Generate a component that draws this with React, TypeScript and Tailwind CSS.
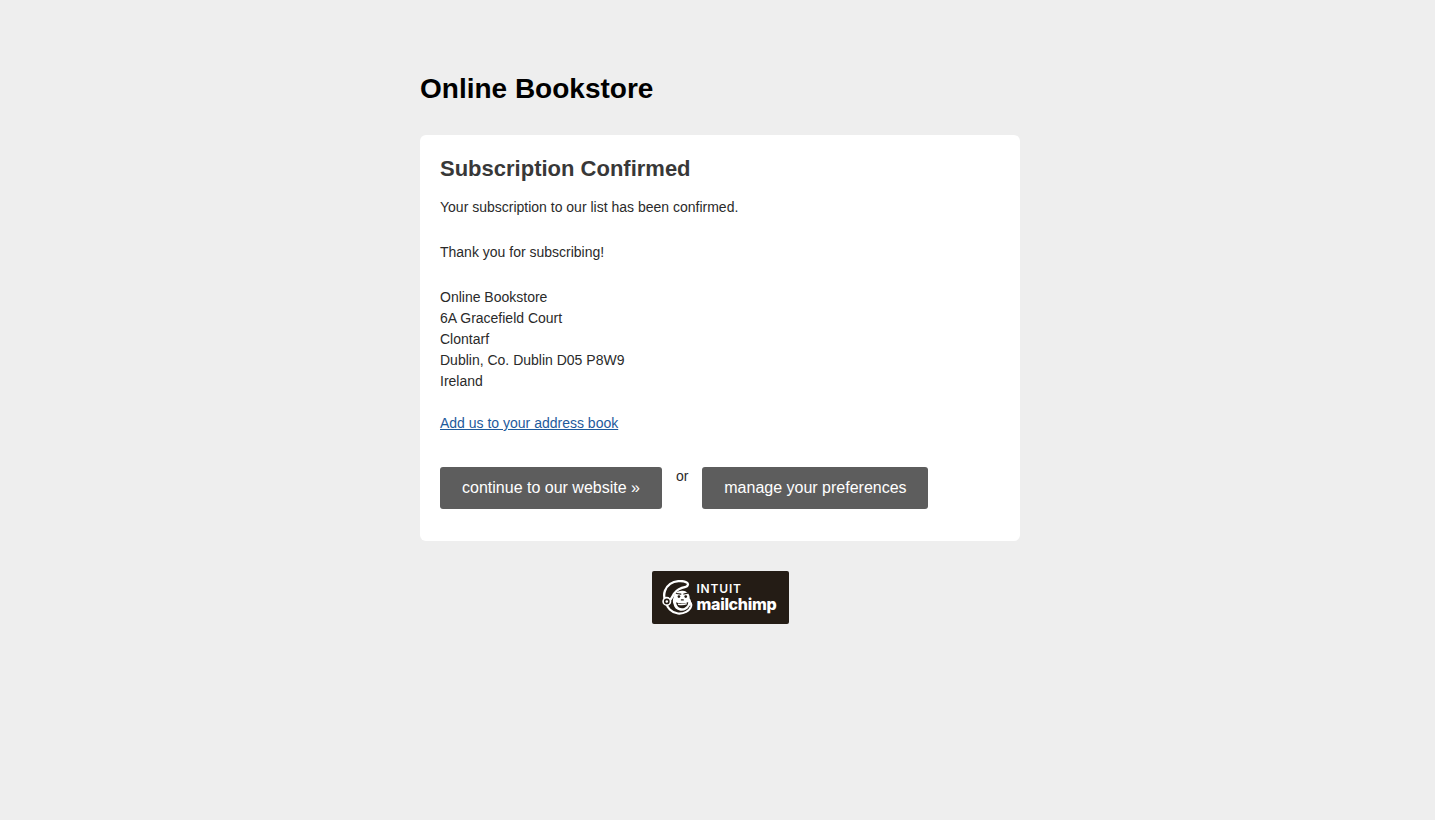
import React from "react";

const MonkeyIcon: React.FC = () => (
    <svg width="32" height="35" viewBox="0 0 32 36" fill="none">
        {/* head outline */}
        <path d="M3.500 20C1.500 14 4 7.500 9 4C13.500 1 21 0 26 2.500C28 3.500 27.500 6.500 25 7C19.500 8 15.500 10 13 14C11 17.500 10 20 7.500 22" stroke="#fff" strokeWidth="2.400" strokeLinecap="round" />
        <path d="M5 22.500C5.500 28.500 10 33.500 17 34.500C23 35 29 32 30.500 27C31 25 30.500 23.500 29 22.500" stroke="#fff" strokeWidth="2.200" strokeLinecap="round" />
        {/* ear */}
        <circle cx="5.500" cy="22" r="3.800" fill="#241c15" stroke="#fff" strokeWidth="1.700" />
        <circle cx="5.500" cy="22" r="1.300" fill="#fff" />
        {/* face */}
        <path d="M12.500 18C13 13.500 17 10.500 22 11C26.500 11.500 29.500 15 29 19C31 21 31 25 28.500 27C27 30.500 23 32 19.500 31.500C15.500 31 13 28.500 12.500 25C11.500 23 11.500 20 12.500 18Z" fill="#fff" />
        {/* eyes */}
        <circle cx="18" cy="17" r="1.400" fill="#241c15" />
        <circle cx="25" cy="17" r="1.400" fill="#241c15" />
        <path d="M15.500 13.800L20 14.500M23 14.500L27 13.500" stroke="#241c15" strokeWidth="1.100" strokeLinecap="round" />
        {/* mouth */}
        <path d="M15 23C18 24.500 24 24.500 27.500 22.500C27.500 26.500 24.500 29 21 29C17.500 29 15.500 26.500 15 23Z" fill="#241c15" />
        <path d="M17 24.800C20 25.600 23.500 25.400 26 24.300" stroke="#fff" strokeWidth="1.400" />
        <path d="M20.500 20.500L22.500 20.500" stroke="#241c15" strokeWidth="1.200" strokeLinecap="round" />
    </svg>
);

const App: React.FC = () => {
    return (
        <div className="min-h-[820px] bg-[#eeeeee] pt-[70px] pl-[420px] font-['Liberation_Sans',Arial,sans-serif] text-[14px] leading-[21px] text-[#2a2a2a]">
            <div className="w-[600px]">
                <h1 className="m-0 h-[65px] text-[28px] leading-[38px] font-bold text-black">Online Bookstore</h1>

                {/* Card */}
                <div className="rounded-[6px] bg-white px-5 pt-5 pb-8">
                    <h2 className="mb-[15px] text-[22px] leading-[27px] font-bold text-[#383838]">Subscription Confirmed</h2>
                    <p className="mb-6">Your subscription to our list has been confirmed.</p>
                    <p className="mb-6">Thank you for subscribing!</p>
                    <p>Online Bookstore</p>
                    <p>6A Gracefield Court</p>
                    <p>Clontarf</p>
                    <p>Dublin, Co. Dublin D05 P8W9</p>
                    <p>Ireland</p>
                    <p className="mt-[21px]">
                        <a href="#" className="text-[#1d5a9c] underline">Add us to your address book</a>
                    </p>

                    <div className="mt-[33px] flex items-start">
                        <a href="#" className="flex h-[42px] w-[222px] items-center justify-center rounded-[3px] bg-[#5d5d5d] pb-[2px] text-[16px] text-white">continue to our website »</a>
                        <span className="mx-[14px] mt-[-1px]">or</span>
                        <a href="#" className="flex h-[42px] w-[226px] items-center justify-center rounded-[3px] bg-[#5d5d5d] pb-[2px] text-[16px] text-white">manage your preferences</a>
                    </div>
                </div>

                {/* Footer badge */}
                <div className="mt-[30px] flex justify-center">
                    <div className="flex h-[53px] w-[137px] items-center gap-[4px] rounded-[2px] bg-[#241c15] pl-[9px]">
                        <MonkeyIcon />
                        <div className="flex flex-col pb-[1px] font-['Inter',sans-serif] text-white">
                            <span className="text-[12px] leading-[14px] font-semibold tracking-[0.8px]">INTUIT</span>
                            <span className="text-[16px] leading-[16px] font-extrabold tracking-[-0.3px]">mailchimp</span>
                        </div>
                    </div>
                </div>
            </div>
        </div>
    );
};

export default App;
